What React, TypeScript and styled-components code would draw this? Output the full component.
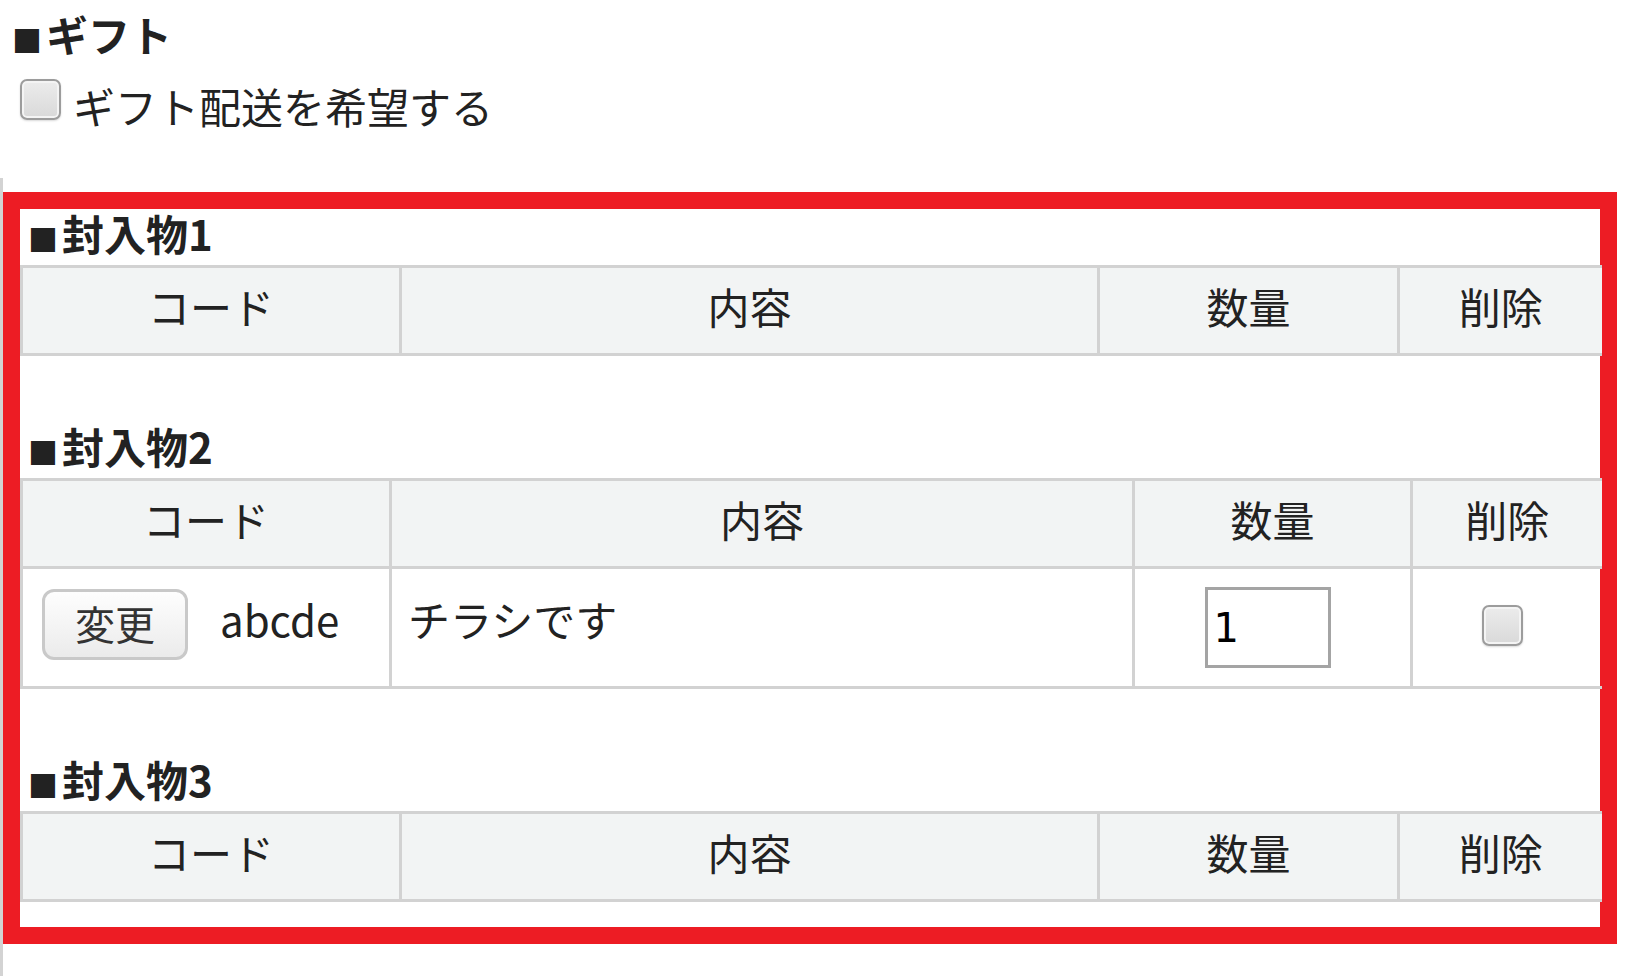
import React from "react";
import styled, { createGlobalStyle } from "styled-components";

const GlobalStyle = createGlobalStyle`
  html, body { margin: 0; padding: 0; background: #fff; }
  body {
    font-family: "Noto Sans CJK JP", "Noto Sans", sans-serif;
    color: #222;
  }
  #root { min-height: 100vh; }
`;

const Page = styled.div`
  width: 1626px;
  min-height: 100vh;
  display: flex;
  flex-direction: column;
`;

const Top = styled.div`
  padding: 6px 0 0 12px;
`;

const Heading = styled.h2<{ $indent?: number; $raise?: number }>`
  margin: 0;
  padding-left: ${(p) => p.$indent ?? 0}px;
  padding-bottom: ${(p) => (p.$raise ?? 0) * 2}px;
  font-size: 42px;
  line-height: ${(p) => 56 - (p.$raise ?? 0) * 2}px;
  font-weight: 700;
  color: #222;
  white-space: nowrap;
`;

const Mark = styled.span`
  font-size: 30px;
  line-height: 1;
  margin-right: 4px;
`;

const CheckRow = styled.label`
  display: flex;
  align-items: center;
  gap: 12px;
  margin-top: 16px;
  padding-left: 8px;
  font-size: 42px;
  line-height: 56px;
  font-weight: 400;
`;

const Check = styled.input.attrs({ type: "checkbox" })<{ $lift?: number }>`
  appearance: none;
  -webkit-appearance: none;
  width: 41px;
  height: 41px;
  margin: 0 0 ${(p) => p.$lift ?? 0}px 0;
  box-sizing: border-box;
  border: 2px solid #9c9c9c;
  border-radius: 7px;
  background: linear-gradient(#ececec, #d9d9d9);
  box-shadow: inset 0 0 0 2px #f4f4f4, 0 1px 2px rgba(0, 0, 0, 0.15);
  flex: none;
`;

const Frame = styled.div`
  flex: 1;
  margin-top: 44px;
  padding-top: 14px;
  border-left: 3px solid #d3d3d3;
`;

const RedBox = styled.section`
  width: 1614px;
  box-sizing: border-box;
  border: 17px solid #ed1c24;
  padding: 0 0 25px 0;
  background: #fff;
`;

const Block = styled.div`
  & + & {
    margin-top: 66px;
  }
`;

const Table = styled.table`
  width: 100%;
  table-layout: fixed;
  border-collapse: collapse;
  font-size: 42px;
`;

const Th = styled.th`
  height: 75px;
  padding: 0 0 10px 0;
  background: #f2f4f4;
  border: 3px solid #d2d2d2;
  font-weight: 400;
  text-align: center;
  vertical-align: middle;
  color: #222;
  line-height: 56px;
  &:last-child { border-right: none; }
`;

const Td = styled.td<{ $center?: boolean }>`
  height: 117px;
  padding: ${(p) => (p.$center ? "0 20px 0 10px" : "0 16px")};
  border: 3px solid #d2d2d2;
  text-align: left;
  vertical-align: middle;
  line-height: 56px;
  color: #222;
  &:first-child { padding-left: 19px; }
  &:last-child { border-right: none; }
`;

const CodeWrap = styled.div`
  display: flex;
  align-items: center;
  gap: 32px;
`;

const CenterBox = styled.div`
  display: flex;
  justify-content: center;
  align-items: center;
`;

const Button = styled.button`
  width: 146px;
  height: 71px;
  margin-bottom: 6px;
  box-sizing: border-box;
  border: 3px solid #c9c9c9;
  border-radius: 12px;
  background: linear-gradient(#fefefe, #ebebeb);
  font-family: "Noto Sans CJK JP", sans-serif;
  font-size: 40px;
  color: #333;
  padding: 0 0 4px 0;
  line-height: 1;
`;

const CellText = styled.span`
  display: inline-block;
  font-size: 42px;
  line-height: 56px;
  margin-bottom: 17px;
`;

const QtyInput = styled.input`
  width: 126px;
  height: 81px;
  box-sizing: border-box;
  border: 3px solid #a4a4a4;
  padding: 0 0 0 6px;
  margin: 0;
  font-family: "DejaVu Sans", sans-serif;
  font-size: 40px;
  color: #000;
`;

const headers = ["コード", "内容", "数量", "削除"];

function EnclosureTable({
  title,
  cols,
  children,
}: {
  title: string;
  cols: number[];
  children?: React.ReactNode;
}) {
  return (
    <Block>
      <Heading $indent={8} $raise={4}>
        <Mark>■</Mark>
        {title}
      </Heading>
      <Table>
        <colgroup>
          {cols.map((w, i) => (
            <col key={i} style={{ width: w }} />
          ))}
        </colgroup>
        <thead>
          <tr>
            {headers.map((h) => (
              <Th key={h}>{h}</Th>
            ))}
          </tr>
        </thead>
        {children && <tbody>{children}</tbody>}
      </Table>
    </Block>
  );
}

export default function App() {
  return (
    <Page>
      <GlobalStyle />
      <Top>
        <Heading>
          <Mark>■</Mark>ギフト
        </Heading>
        <CheckRow>
          <Check $lift={14} />
          ギフト配送を希望する
        </CheckRow>
      </Top>
      <Frame>
        <RedBox>
          <EnclosureTable title="封入物1" cols={[379, 698, 300, 203]} />
          <EnclosureTable title="封入物2" cols={[369, 743, 278, 190]}>
            <tr>
              <Td>
                <CodeWrap>
                  <Button type="button">変更</Button>
                  <CellText>abcde</CellText>
                </CodeWrap>
              </Td>
              <Td>
                <CellText>チラシです</CellText>
              </Td>
              <Td $center>
                <CenterBox>
                  <QtyInput defaultValue="1" />
                </CenterBox>
              </Td>
              <Td $center>
                <CenterBox>
                  <Check $lift={5} />
                </CenterBox>
              </Td>
            </tr>
          </EnclosureTable>
          <EnclosureTable title="封入物3" cols={[379, 698, 300, 203]} />
        </RedBox>
      </Frame>
    </Page>
  );
}
